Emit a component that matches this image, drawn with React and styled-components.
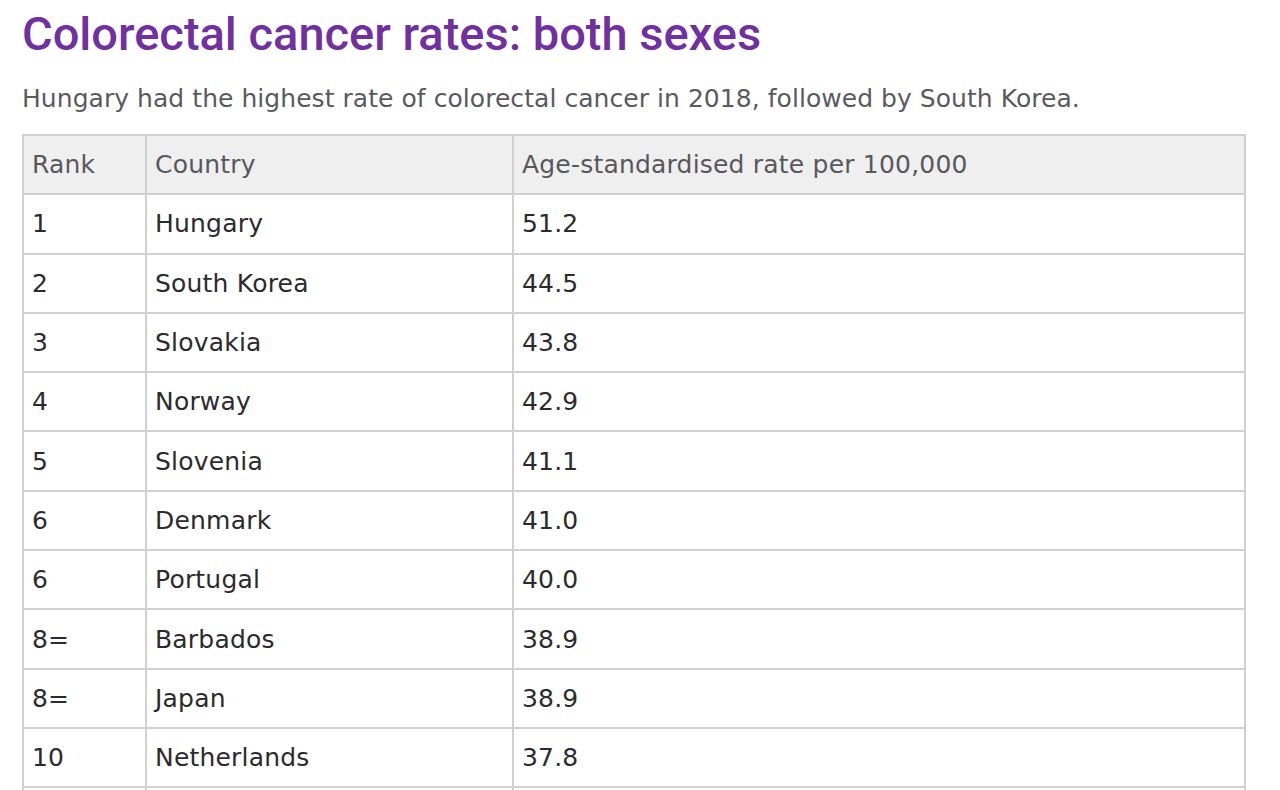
import React from "react";
import styled, { createGlobalStyle } from "styled-components";

const Global = createGlobalStyle`
  html, body { margin: 0; padding: 0; background: #fff; overflow: hidden; }
  body { font-family: "DejaVu Sans", "Liberation Sans", sans-serif; }
`;

const rows = [
  ["1", "Hungary", "51.2"],
  ["2", "South Korea", "44.5"],
  ["3", "Slovakia", "43.8"],
  ["4", "Norway", "42.9"],
  ["5", "Slovenia", "41.1"],
  ["6", "Denmark", "41.0"],
  ["6", "Portugal", "40.0"],
  ["8=", "Barbados", "38.9"],
  ["8=", "Japan", "38.9"],
  ["10", "Netherlands", "37.8"],
  ["", "", ""],
];

const Page = styled.div`
  padding: 8px 34px 0 22px;
`;

const Title = styled.h1`
  margin: 0;
  font-family: "Roboto", "Liberation Sans", sans-serif;
  font-weight: 500;
  font-size: 47px;
  line-height: 52px;
  color: #7030a0;
`;

const Subtitle = styled.p`
  margin: 20px 0 0;
  font-size: 25px;
  line-height: 38px;
  color: #5a5a5e;
  letter-spacing: 0.05px;
`;

const Table = styled.table`
  margin-top: 16px;
  width: 1224px;
  border-collapse: collapse;
  border: 2px solid #d0d0d0;
  font-size: 25px;
  letter-spacing: 0.2px;
`;

const HeadCell = styled.th`
  background: #efefef;
  color: #58585c;
  font-weight: 400;
  text-align: left;
  height: 59.3px;
  padding: 0 0 0 8px;
  border: 2px solid #d0d0d0;
  width: ${(p) => p.$w || "auto"};
  box-sizing: border-box;
`;

const Cell = styled.td`
  color: #2b2b2e;
  height: 59.3px;
  padding: 0 0 0 8px;
  border: 2px solid #d0d0d0;
  box-sizing: border-box;
`;

export default function App() {
  return (
    <>
      <Global />
      <Page>
        <Title>Colorectal cancer rates: both sexes</Title>
        <Subtitle>
          Hungary had the highest rate of colorectal cancer in 2018, followed by South Korea.
        </Subtitle>
        <Table>
          <thead>
            <tr>
              <HeadCell $w="123px">Rank</HeadCell>
              <HeadCell $w="367px">Country</HeadCell>
              <HeadCell>Age-standardised rate per 100,000</HeadCell>
            </tr>
          </thead>
          <tbody>
            {rows.map((r, i) => (
              <tr key={i}>
                <Cell>{r[0]}</Cell>
                <Cell>{r[1]}</Cell>
                <Cell>{r[2]}</Cell>
              </tr>
            ))}
          </tbody>
        </Table>
      </Page>
    </>
  );
}
